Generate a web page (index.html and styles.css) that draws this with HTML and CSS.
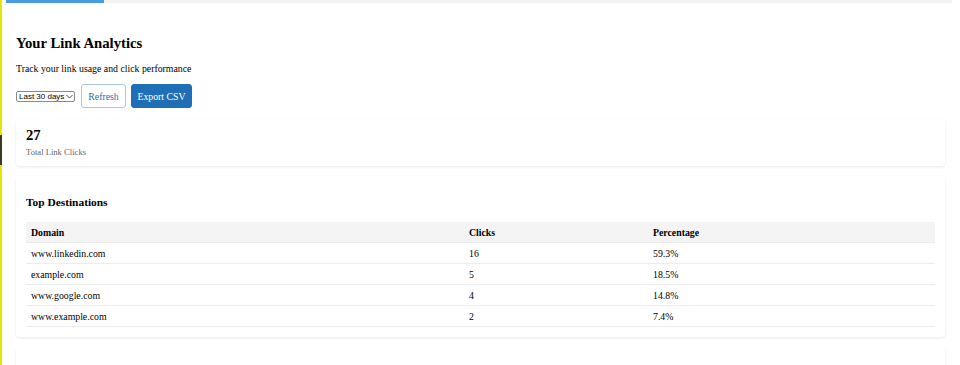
FILE: index.html
```html
<!DOCTYPE html>
<html lang="en">
  <head>
    <meta charset="UTF-8" />
    <meta name="viewport" content="width=device-width, initial-scale=1.0" />
    <title>Your Link Analytics</title>
    <link rel="stylesheet" href="styles.css">
  </head>
  <body>
    <div class="scroll-thumb"></div>
    <div class="progress"><div class="progress-fill"></div></div>

    <div class="content">
      <h2 class="titulo">Your Link Analytics</h2>
      <p class="subtitle">Track your link usage and click performance</p>

      <div class="controls">
        <span class="select-wrap">
          <select id="range">
            <option>Last 30 days</option>
            <option>Last 7 days</option>
            <option>Last 90 days</option>
          </select>
          <svg class="chevron" width="7" height="5" viewBox="0 0 7 5">
            <path d="M0.5 1 L3.5 4 L6.5 1" fill="none" stroke="#333" stroke-width="0.9" />
          </svg>
        </span>
        <button class="btn-outline">Refresh</button>
        <button class="btn-primary">Export CSV</button>
      </div>

      <div class="card stat-card">
        <div class="stat-value">27</div>
        <div class="stat-label">Total Link Clicks</div>
      </div>

      <div class="card">
        <h3>Top Destinations</h3>
        <table class="dest-table">
          <thead>
            <tr>
              <th class="col-domain">Domain</th>
              <th class="col-clicks">Clicks</th>
              <th>Percentage</th>
            </tr>
          </thead>
          <tbody>
            <tr><td>www.linkedin.com</td><td>16</td><td>59.3%</td></tr>
            <tr><td>example.com</td><td>5</td><td>18.5%</td></tr>
            <tr><td>www.google.com</td><td>4</td><td>14.8%</td></tr>
            <tr><td>www.example.com</td><td>2</td><td>7.4%</td></tr>
          </tbody>
        </table>
      </div>

      <div class="card empty-card"></div>
    </div>
  </body>
</html>
```

FILE: styles.css
```css
body {
  font-family: "Liberation Serif", "Times New Roman", serif;
  margin: 0;
  padding: 0;
  background-color: white;
  color: black;
  border-left: 2px solid #e6e600;
  min-height: 365px;
  overflow: hidden;
}

.scroll-thumb {
  position: absolute;
  left: 0;
  top: 135px;
  width: 2px;
  height: 30px;
  background-color: #3a3a1e;
}

.progress {
  height: 3px;
  margin: 0 8px 0 4px;
  background-color: #f3f3f3;
}

.progress-fill {
  width: 98px;
  height: 3px;
  background-color: #4a9be6;
}

.content {
  padding: 0 15px 0 14px;
}

.titulo {
  font-size: 14.7px;
  line-height: 17px;
  margin: 32px 0 0;
}

.subtitle {
  font-size: 9.8px;
  line-height: 12px;
  margin: 11px 0 0;
}

.controls {
  display: flex;
  align-items: center;
  margin-top: 9px;
  height: 24px;
}

.select-wrap {
  position: relative;
  display: inline-flex;
  margin-right: 6px;
}

.select-wrap select {
  appearance: none;
  -webkit-appearance: none;
  font-family: "Liberation Sans", Arial, sans-serif;
  font-size: 8px;
  color: black;
  background-color: white;
  height: 11px;
  width: 59px;
  padding: 0 0 0 2px;
  border: 1px solid #8a8a8a;
  border-radius: 2px;
}

.chevron {
  position: absolute;
  right: 2px;
  top: 3px;
  pointer-events: none;
}

.controls button {
  font-family: "Liberation Serif", "Times New Roman", serif;
  font-size: 9.8px;
  height: 24px;
  border-radius: 3px;
  cursor: pointer;
  padding: 0;
}

.btn-outline {
  width: 45px;
  background-color: white;
  color: #2a6fb3;
  border: 1px solid #aac8e6;
  margin-right: 5px;
}

.btn-primary {
  width: 61px;
  background-color: #1f6fb6;
  color: white;
  border: 1px solid #1f6fb6;
}

.card {
  background-color: white;
  border-radius: 4px;
  box-shadow: 0 1px 3px rgba(0, 0, 0, 0.09);
  padding: 10px;
  margin-top: 10px;
}

.stat-card {
  margin-top: 11px;
  padding: 8px 10px 9px;
}

.stat-value {
  font-size: 14.7px;
  line-height: 17px;
  font-weight: bold;
}

.stat-label {
  font-size: 8.6px;
  line-height: 10px;
  color: #666;
  margin-top: 3px;
}

.card h3 {
  font-size: 11.4px;
  line-height: 13px;
  margin: 10px 0 13px;
}

.dest-table {
  width: 100%;
  border-collapse: collapse;
  font-size: 9.8px;
}

.dest-table th,
.dest-table td {
  text-align: left;
  padding: 0 5px;
  height: 20px;
  border-bottom: 1px solid #ececec;
}

.dest-table th {
  background-color: #f4f4f4;
}

.col-domain {
  width: 428px;
}

.col-clicks {
  width: 174px;
}

.empty-card {
  height: 40px;
}
```
